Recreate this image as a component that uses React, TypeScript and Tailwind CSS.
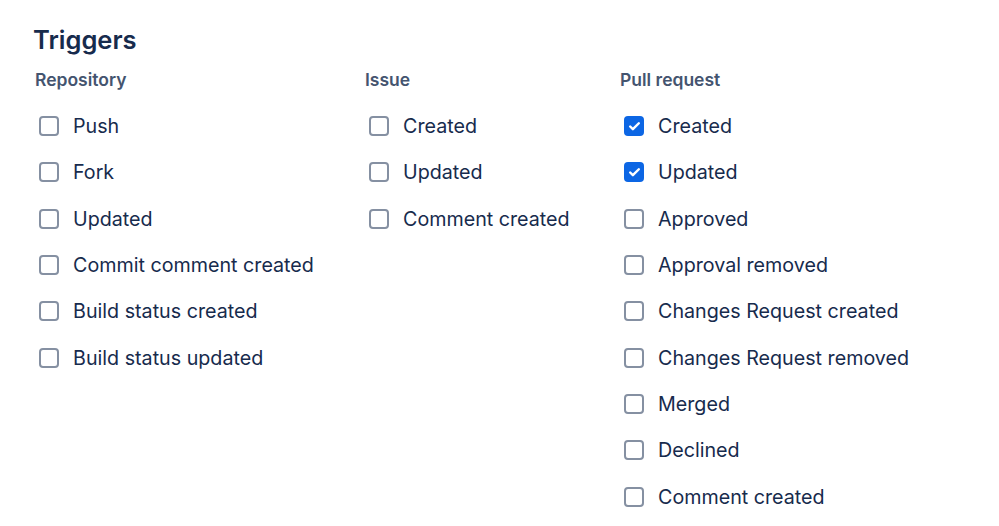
import { Check } from 'lucide-react'

type Item = { label: string; checked?: boolean }

const columns: { title: string; items: Item[] }[] = [
    {
        title: 'Repository',
        items: [
            { label: 'Push' },
            { label: 'Fork' },
            { label: 'Updated' },
            { label: 'Commit comment created' },
            { label: 'Build status created' },
            { label: 'Build status updated' },
        ],
    },
    {
        title: 'Issue',
        items: [{ label: 'Created' }, { label: 'Updated' }, { label: 'Comment created' }],
    },
    {
        title: 'Pull request',
        items: [
            { label: 'Created', checked: true },
            { label: 'Updated', checked: true },
            { label: 'Approved' },
            { label: 'Approval removed' },
            { label: 'Changes Request created' },
            { label: 'Changes Request removed' },
            { label: 'Merged' },
            { label: 'Declined' },
            { label: 'Comment created' },
        ],
    },
]

function Box({ checked }: { checked?: boolean }) {
    if (checked) {
        return (
            <span className="flex items-center justify-center w-[20px] h-[20px] rounded-[4px] bg-[#0c66e4]">
                <Check className="w-[13px] h-[13px] text-white" strokeWidth={4.5} />
            </span>
        )
    }
    return <span className="block w-[20px] h-[20px] rounded-[4px] border-[2.5px] border-[#8590a2] bg-white" />
}

export default function App() {
    return (
        <div className="w-[999px] h-[526px] bg-white overflow-hidden pl-[33px] pt-[22px] text-[#172b4d] font-['Inter',sans-serif]">
            <h1 className="text-[25.5px] leading-[36px] font-semibold">Triggers</h1>
            <div className="grid grid-cols-[330px_255px_1fr] pl-[2px] mt-[9px]">
                {columns.map((col) => (
                    <div key={col.title} className="flex flex-col">
                        <h2 className="text-[17.5px] leading-[26px] font-semibold text-[#44546f]">{col.title}</h2>
                        <div className="flex flex-col mt-[10px]">
                            {col.items.map((it) => (
                                <label key={it.label} className="flex items-center h-[46.3px] pl-[4px] gap-[14px]">
                                    <Box checked={it.checked} />
                                    <span className="text-[19.7px] leading-[24px]">{it.label}</span>
                                </label>
                            ))}
                        </div>
                    </div>
                ))}
            </div>
        </div>
    )
}
